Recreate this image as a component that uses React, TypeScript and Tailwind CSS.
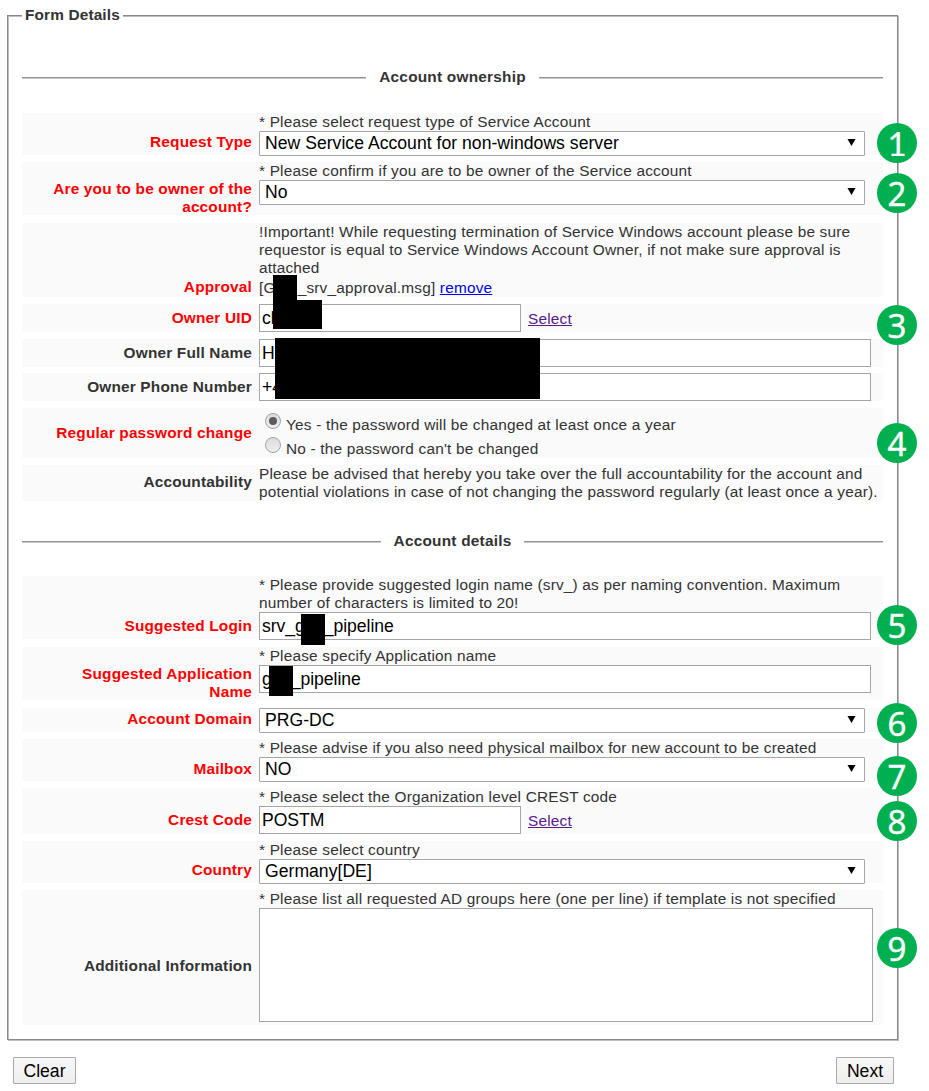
import type { ReactNode } from "react";

type RowProps = { label: string; required?: boolean; box: string; labelPad: string; children: ReactNode };

function Row({ label, required, box, labelPad, children }: RowProps) {
  return (
    <div className={`flex w-[861px] shrink-0 bg-[#fafafa] ${box}`}>
      <div className={`w-[230px] shrink-0 pl-6 text-right font-bold tracking-[0.18px] ${labelPad} ${required ? "text-[#ff0000]" : "text-[#333]"}`}>
        {label}
      </div>
      <div className="ml-[7px] w-[624px] shrink-0 tracking-[0.19px]">{children}</div>
    </div>
  );
}

function Hint({ children }: { children: ReactNode }) {
  return <div className="h-[18px] whitespace-nowrap">{children}</div>;
}

function Select({ value }: { value: string }) {
  return (
    <div className="flex h-[25px] w-[606px] items-center justify-between rounded-[1px] border border-[#a6a6a6] bg-white pr-[8px] pl-[5px] text-[17.6px] leading-[23px] tracking-[0.02px] text-black">
      <span>{value}</span>
      <svg className="mb-[2px] h-[7px] w-[9px]" viewBox="0 0 9 7">
        <path d="M0.5 0H8.5L4.5 7Z" fill="#000" />
      </svg>
    </div>
  );
}

function Input({ value, width }: { value: ReactNode; width: string }) {
  return (
    <div className={`relative h-[28px] border border-[#a6a6a6] bg-white pl-[2px] text-[17.6px] leading-[26px] tracking-[-0.05px] whitespace-pre text-black ${width}`}>
      {value}
    </div>
  );
}

function Redact({ box }: { box: string }) {
  return <span className={`absolute z-10 bg-black ${box}`} />;
}

function Divider({ title, pad }: { title: string; pad: string }) {
  return (
    <div className={`flex h-[18px] w-[861px] shrink-0 items-center font-bold tracking-[0.22px] ${pad}`}>
      <span className="mt-[2px] h-[2px] flex-1 border-t border-b border-t-[#939393] border-b-[#c9c9c9]" />
      <span className="px-[13px]">{title}</span>
      <span className="mt-[2px] h-[2px] flex-1 border-t border-b border-t-[#939393] border-b-[#c9c9c9]" />
    </div>
  );
}

function Radio({ checked }: { checked?: boolean }) {
  return (
    <span className="flex h-4 w-4 items-center justify-center rounded-full border border-[#a3a3a3] bg-linear-to-b from-[#dcdcdc] to-[#efefef]">
      {checked && <span className="h-2 w-2 rounded-full bg-[#5c5c5c]" />}
    </span>
  );
}

function SelectLink() {
  return <a className="text-[#551a8b] underline">Select</a>;
}

const badges = [
  { n: 1, style: "top-[123px] font-[Lato,sans-serif] [-webkit-text-stroke:0.2px_white]" },
  { n: 2, style: "top-[173px] pt-px font-['Open_Sans',sans-serif] [-webkit-text-stroke:0.5px_white]" },
  { n: 3, style: "top-[305px] font-['Open_Sans',sans-serif] [-webkit-text-stroke:0.5px_white]" },
  { n: 4, style: "top-[423px] font-['Open_Sans',sans-serif] [-webkit-text-stroke:0.5px_white]" },
  { n: 5, style: "top-[605px] font-['Open_Sans',sans-serif] [-webkit-text-stroke:0.5px_white]" },
  { n: 6, style: "top-[703px] font-['Open_Sans',sans-serif] [-webkit-text-stroke:0.5px_white]" },
  { n: 7, style: "top-[756px] font-['Open_Sans',sans-serif] [-webkit-text-stroke:0.5px_white]" },
  { n: 8, style: "top-[801px] font-['Open_Sans',sans-serif] [-webkit-text-stroke:0.5px_white]" },
  { n: 9, style: "top-[928px] font-['Open_Sans',sans-serif] [-webkit-text-stroke:0.5px_white]" },
];

export default function App() {
  return (
    <div className="relative h-[1091px] w-[929px] overflow-hidden bg-white pt-[15px] pl-[7px] font-['Liberation_Sans',Arial,sans-serif] text-[15.4px] leading-[18px] text-[#333]">
      <div className="relative flex h-[1025px] w-[891px] flex-col border border-[#8a8a8a] pl-[14px] shadow-[1px_1px_0_#bdbdbd,inset_1px_1px_0_#bdbdbd]">
        <div className="absolute -top-[10px] left-[14px] bg-white px-[3px] font-bold tracking-[0.14px]">Form Details</div>
        <Divider title="Account ownership" pad="mt-[52px]" />
        <div className="mt-[27px] flex flex-col">
          <Row label="Request Type" required box="h-[42px]" labelPad="pt-5">
            <Hint>* Please select request type of Service Account</Hint>
            <Select value="New Service Account for non-windows server" />
          </Row>
          <Row label="Are you to be owner of the account?" required box="mt-[7px] h-[53px]" labelPad="pt-[18px]">
            <Hint>* Please confirm if you are to be owner of the Service account</Hint>
            <Select value="No" />
          </Row>
          <Row label="Approval" required box="mt-[8px] h-[74px]" labelPad="pt-[55px]">
            <div className="whitespace-nowrap">
              !Important! While requesting termination of Service Windows account please be sure
              <br />
              requestor is equal to Service Windows Account Owner, if not make sure approval is
              <br />
              attached
            </div>
            <div className="relative mt-[2px] whitespace-pre">
              [G<span className="inline-block w-[22px]" />_srv_approval.msg] <a className="text-[#0000ee] underline">remove</a>
              <Redact box="-top-[4px] left-[14px] h-[26px] w-6" />
            </div>
          </Row>
          <Row label="Owner UID" required box="mt-[7px] h-[28px]" labelPad="pt-[5px]">
            <div className="flex items-center gap-[7px]">
              <Input width="w-[262px]" value={<>cl<Redact box="-top-[5px] left-[13px] h-[29px] w-[49px]" /></>} />
              <span className="mt-[2px]"><SelectLink /></span>
            </div>
          </Row>
          <Row label="Owner Full Name" box="mt-[7px] h-[28px]" labelPad="pt-[5px]">
            <Input width="w-[612px]" value={<>Ha<Redact box="-top-[2px] left-[15px] h-[61px] w-[265px]" /></>} />
          </Row>
          <Row label="Owner Phone Number" box="mt-[6px] h-[28px]" labelPad="pt-[5px]">
            <Input width="w-[612px]" value="+4" />
          </Row>
          <Row label="Regular password change" required box="mt-[7px] h-[50px]" labelPad="pt-4">
            <div className="flex gap-[5px] pt-[5px] pl-[6px]"><Radio checked /><span className="mt-[3px]">Yes - the password will be changed at least once a year</span></div>
            <div className="mt-[3px] flex gap-[5px] pl-[6px]"><Radio /><span className="mt-[3px]">No - the password can't be changed</span></div>
          </Row>
          <Row label="Accountability" box="mt-[7px] h-[36px]" labelPad="pt-[8px]">
            <div className="whitespace-nowrap">
              Please be advised that hereby you take over the full accountability for the account and
              <br />
              potential violations in case of not changing the password regularly (at least once a year).
            </div>
          </Row>
        </div>
        <Divider title="Account details" pad="mt-[31px]" />
        <div className="mt-[26px] flex flex-col">
          <Row label="Suggested Login" required box="h-[63px]" labelPad="pt-[41px]">
            <Hint>* Please provide suggested login name (srv_) as per naming convention. Maximum</Hint>
            <Hint>number of characters is limited to 20!</Hint>
            <Input width="w-[612px]" value={<>srv_g<span className="inline-block w-[19px]" />_pipeline<Redact box="top-[1px] left-[41px] h-[31px] w-6" /></>} />
          </Row>
          <Row label="Suggested Application Name" required box="mt-[8px] h-[53px]" labelPad="pt-[18px]">
            <Hint>* Please specify Application name</Hint>
            <Input width="w-[612px]" value={<>g<span className="inline-block w-[19px]" />_pipeline<Redact box="top-0 left-[9px] h-[30px] w-6" /></>} />
          </Row>
          <Row label="Account Domain" required box="mt-[8px] h-[24px]" labelPad="pt-[2px]">
            <Select value="PRG-DC" />
          </Row>
          <Row label="Mailbox" required box="mt-[7px] h-[42px]" labelPad="pt-[21px]">
            <Hint>* Please advise if you also need physical mailbox for new account to be created</Hint>
            <Select value="NO" />
          </Row>
          <Row label="Crest Code" required box="mt-[7px] h-[46px]" labelPad="pt-[23px]">
            <Hint>* Please select the Organization level CREST code</Hint>
            <div className="flex items-center gap-[7px]">
              <Input width="w-[262px]" value="POSTM" />
              <span className="mt-[2px]"><SelectLink /></span>
            </div>
          </Row>
          <Row label="Country" required box="mt-[7px] h-[42px]" labelPad="pt-5">
            <Hint>* Please select country</Hint>
            <Select value="Germany[DE]" />
          </Row>
          <Row label="Additional Information" box="mt-[7px] h-[135px]" labelPad="pt-[67px]">
            <Hint>* Please list all requested AD groups here (one per line) if template is not specified</Hint>
            <div className="h-[114px] w-[614px] border border-[#a6a6a6] bg-white" />
          </Row>
        </div>
      </div>
      <div className="mt-[17px] flex w-[887px] justify-between pl-[6px] text-[17.6px] text-black">
        <button className="h-[27px] w-[63px] rounded-[1px] border border-[#a9a9a9] bg-linear-to-b from-[#f8f8f8] to-[#eeeeee]">Clear</button>
        <button className="h-[27px] w-[58px] rounded-[1px] border border-[#a9a9a9] bg-linear-to-b from-[#f8f8f8] to-[#eeeeee]">Next</button>
      </div>
      {badges.map((b) => (
        <div key={b.n} className={`absolute left-[877px] z-20 flex h-10 w-10 items-center justify-center rounded-full bg-[#00b050] text-[33px] leading-none text-white ${b.style}`}>
          {b.n}
        </div>
      ))}
    </div>
  );
}
